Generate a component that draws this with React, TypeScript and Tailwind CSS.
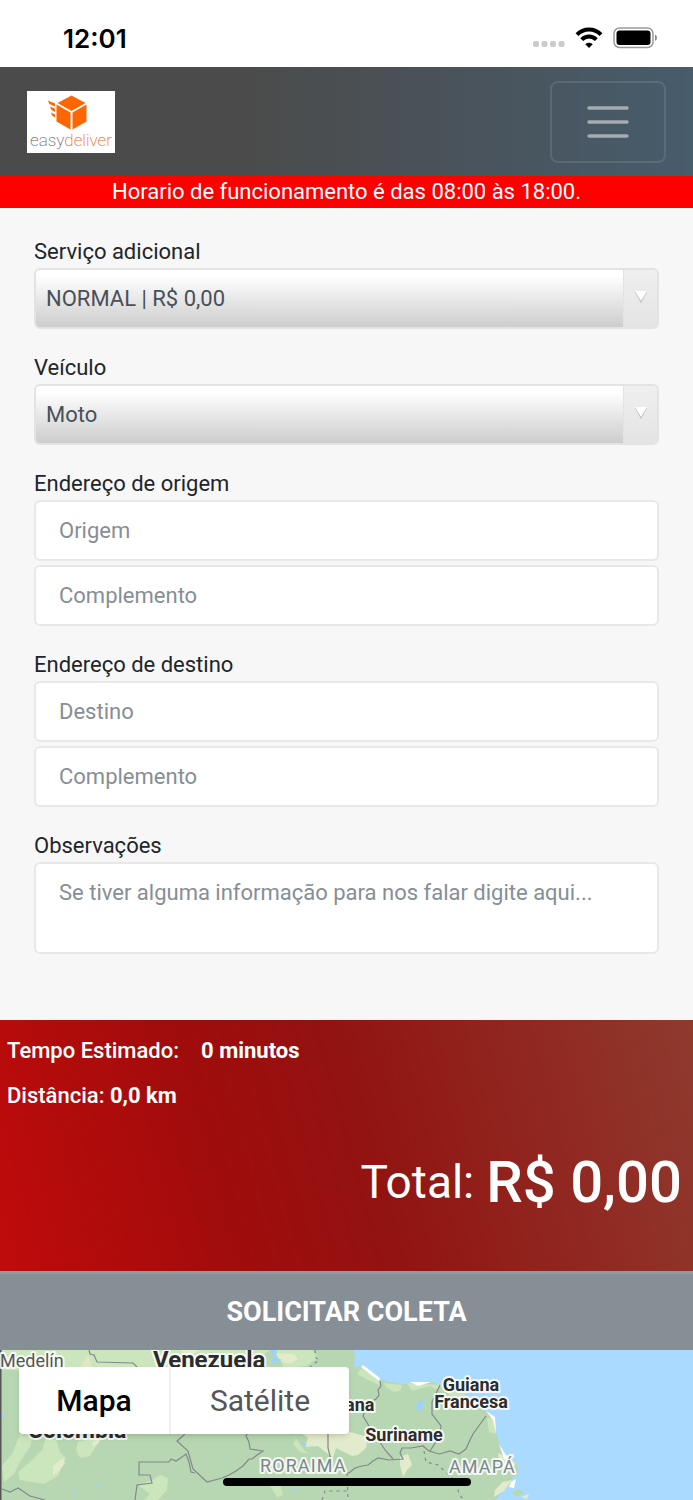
import React from 'react'

const Logo = () => (
  <a href="#" aria-label="easydeliver" className="flex h-[62px] w-[88px] flex-col items-center bg-white pt-1">
    <svg width="40" height="36" viewBox="0 0 40 36" fill="#ff6500" className="mr-2 shrink-0">
      <path d="M24.500 0.500L38.500 8L24.500 16L10.500 8Z" />
      <path d="M9.500 9.500L23.500 17.500V34.500L9.500 26.500Z" />
      <path d="M39.500 9.500L25.500 17.500V34.500L39.500 26.500Z" />
      <path d="M0.800 5.500L8 8.500V11.500L2.500 9Z" />
      <path d="M2.800 11.500L8 13.800V17L4.500 15Z" />
      <path d="M4 17.500L8 19.500V22.500L5 20.500Z" />
    </svg>
    <span className="font-['Roboto'] text-[17px] leading-[18px] font-extralight text-[#666]">
      easy<span className="text-[#f06a14]">deliver</span>
    </span>
  </a>
)

const StatusBar = () => (
  <div className="flex h-[67px] items-center justify-between bg-white pt-2 pr-[34px] pl-[63px]">
    <span className="pt-0.5 font-['Inter'] text-[26px] font-semibold text-black">12:01</span>
    <div className="flex items-center">
      <svg width="32" height="24" viewBox="0 0 32 24" fill="#cbcbcb">
        <rect x="0" y="15" width="6" height="6" rx="2" />
        <rect x="8.500" y="15" width="6" height="6" rx="2" />
        <rect x="17" y="15" width="6" height="6" rx="2" />
        <rect x="25.500" y="15" width="6" height="6" rx="2" />
      </svg>
      <svg width="28" height="22" viewBox="0 0 28 22" className="mx-2.5 shrink-0">
        <path d="M2 7.700C8.500 0.800 19.500 0.800 26 7.700" fill="none" stroke="#000" strokeWidth="4" />
        <path d="M6.700 12.600C10.800 8.400 17.200 8.400 21.300 12.600" fill="none" stroke="#000" strokeWidth="4" />
        <path d="M14 21L10.300 17.200C12.300 15.200 15.700 15.200 17.700 17.200Z" />
      </svg>
      <svg width="46" height="22" viewBox="0 0 46 22" className="shrink-0">
        <rect x="1" y="1" width="39" height="19.500" rx="5.500" fill="none" stroke="#999" strokeWidth="1.500" />
        <rect x="3.500" y="3.500" width="34" height="14.500" rx="3" />
        <path d="M42 7.500Q44 8.500 44 10.800T42 14Z" fill="#888" />
      </svg>
    </div>
  </div>
)

const Navbar = () => (
  <header className="flex h-[109px] items-center justify-between bg-linear-to-r from-[#4b4b4b] from-35% to-[#475c6c] px-[27px]">
    <Logo />
    <button
      type="button"
      aria-label="Menu"
      className="flex h-[82px] w-[116px] items-center justify-center rounded-lg border-2 border-white/10"
    >
      <svg width="44" height="34" viewBox="0 0 44 34" stroke="#a4abb1" strokeWidth="3.500" strokeLinecap="round">
        <path d="M3 3H41M3 17H41M3 31H41" />
      </svg>
    </button>
  </header>
)

const SelectField = ({ id, label, option }: { id: string; label: string; option: string }) => (
  <div className="flex flex-col">
    <label htmlFor={id} className="leading-[33px]">{label}</label>
    <div className="flex h-[61px] overflow-hidden rounded-md border-2 border-[#e3e3e3]">
      <select
        id={id}
        className="min-w-0 flex-1 appearance-none bg-linear-to-b from-white from-10% to-[#cdcdcd] px-2.5 text-[#495057]"
      >
        <option>{option}</option>
      </select>
      <div className="flex w-[34px] items-center justify-center border-l border-[#e3e3e3] bg-linear-to-b from-[#efefef] to-[#e4e4e4] pb-1">
        <svg width="14" height="14" viewBox="0 0 14 14">
          <path d="M1 2H13L7 13Z" fill="#bbb" />
          <path d="M1 1H13L7 11Z" fill="#fff" />
        </svg>
      </div>
    </div>
  </div>
)

const inputClass =
  'h-[61px] w-full rounded-md border-2 border-[#e8e8e8] bg-white px-[23px] text-[#495057] placeholder:text-[#868e96]'

const AddressField = ({ id, label, placeholder }: { id: string; label: string; placeholder: string }) => (
  <div className="flex flex-col">
    <label htmlFor={id} className="leading-[33px]">{label}</label>
    <div className="flex flex-col gap-1">
      <input id={id} type="text" placeholder={placeholder} className={inputClass} />
      <input type="text" aria-label={`${label} - complemento`} placeholder="Complemento" className={inputClass} />
    </div>
  </div>
)

const MapDrawing = () => (
  <svg
    className="h-[150px] w-full"
    viewBox="0 0 693 150"
    preserveAspectRatio="xMidYMid slice"
    role="img"
    aria-label="Mapa"
  >
    <rect width="693" height="150" fill="#aadaff" />
    <path
      d="M0 0H353L355 5L354 17L363 16L380 30L403 34L418 32L431 32L441 35L463 43L476 52L485 60L494 67L496 83L500 94L503 103L510 109L518 115L518 123L512 129L510 135L503 141L495 150H0Z"
      fill="#b7d7b2"
    />
    {/* lowlands */}
    <g fill="#cbe5bc">
      <path d="M2 0H270L262 6L230 18L100 18L85 20L2 20Z" />
      <path d="M276 0H312L318 8L306 16L284 18Z" />
      <path d="M20 84L33 84L30 97L20 112L14 124L4 132L2 116L12 104Z" />
      <path d="M30 112L42 100L46 88L56 90L60 102L66 108L58 126L44 134L20 130L18 122Z" />
      <path d="M78 92L92 88L102 88L96 96L90 106L80 108L76 100Z" />
      <path d="M138 135L152 130L160 125L168 128L167 140L158 150H144L150 144Z" />
      <path d="M357 24L363 16L380 30L379 35L370 31Z" />
      <path d="M384 33L402 35L400 41L394 42L386 37Z" />
      <path d="M407 33L441 35L438 40L430 36L412 41Z" />
      <path d="M441 35L463 43L468 47L450 46Z" />
      <path d="M487 68L494 68L496 84L489 82Z" />
      <path d="M296 88L304 100L309 104L300 102L293 94Z" />
      <path d="M270 136L280 134L283 145L277 147Z" />
    </g>
    <path d="M80 17L88 4L92 17Z" fill="#dfe8c4" />
    {/* savanna */}
    <g fill="#e3ebcd">
      <path d="M53 116L63 108L65 113L57 123L53 125Z" />
      <path d="M92 92L100 88L99 93L93 97Z" />
      <path d="M297 80L314 83L350 82L368 87L366 98L358 105L352 106L336 98L333 108L318 96L305 97L308 88Z" />
      <path d="M180 0H198L192 5L184 4Z" />
      <path d="M400 107L408 104L412 115L407 120L403 127L400 115Z" />
      <path d="M276 3L294 4L298 9L290 14L279 10Z" />
      <path d="M498 103L508 108L516 114L509 120L500 116Z" />
      <path d="M495 140L503 132L512 130L504 141L494 147Z" />
      <path d="M521 147L529 144L527 149Z" />
    </g>
    <path d="M511 142L520 139L524 143L516 147Z" fill="#b7d7b2" />
    <g fill="#fff">
      <path d="M363 15L380 28L379 31L361 17Z" />
      <path d="M410 32H431L418 36Z" />
      <path d="M486 61L495 67L496 83L493 70Z" />
      <path d="M499 94L506 105L513 109L504 109Z" />
      <path d="M511 132L516 129L514 138L509 137Z" />
    </g>
    <g fill="#9dd3fb">
      <path d="M270 0H277L275 7L282 10L270 14L273 7Z" />
      <path d="M417 52L425 50L423 56L419 62L416 58Z" />
      <path d="M298 91L307 95L305 97Z" />
      <path d="M95 132L101 137L99 138Z" />
      <path d="M70 138L78 145L74 143Z" />
      <path d="M2 61L4 66L2 67Z" />
      <path d="M294 137L297 140L295 143Z" />
    </g>
    {/* borders */}
    <g fill="none" stroke="#83898a" strokeWidth="1.200">
      <path d="M89 0L90 4L94 5L97 12L133 13L138 18" />
      <path d="M185 84L177 91L188 101L193 119L207 132L222 128L229 125L236 121L243 116L249 109L252 109L257 105L263 101L250 99L249 92L246 86L249 80" />
      <path d="M195 123L191 122L189 112L186 104L182 107L176 111L171 109L169 112H139V125H150L152 133L137 135L135 150" />
      <path d="M328 80V98L331 110" />
      <path d="M380 31L381 36L378 40L379 45L376 49L367 54L363 66L369 76L378 89L385 100L393 109" />
      <path d="M343 123H349L355 118L362 116L368 115L373 111L378 108L389 110L403 109L400 103L402 98L411 98L423 96L429 101L439 104L443 103L450 101L459 104L466 99L470 90L473 84L486 66" />
      <path d="M440 35L432 52V64L441 76L439 87L430 101" />
      <path d="M2 139L10 142L18 138L30 146L45 150" />
      <g strokeDasharray="3 4">
        <path d="M424 101L426 112L438 115L448 124L456 132L459 144L464 150" />
        <path d="M315 0L316 8L319 10L310 17M322 150L325 141H348M347 123L348 150" />
      </g>
    </g>
    <rect width="1.500" height="150" fill="#555" />
    <g
      className="font-['Roboto']"
      stroke="#fff"
      strokeOpacity=".85"
      strokeWidth="4"
      strokeLinejoin="round"
      paintOrder="stroke"
      fill="#2c2c2c"
    >
      <text x="0" y="17" fontSize="18" fill="#555">Medelín</text>
      <g fontWeight="700">
        <text x="153" y="18" fontSize="24">Venezuela</text>
        <text x="28" y="88" fontSize="23">Colombia</text>
        <text x="318" y="61" fontSize="18">Guiana</text>
        <text fontSize="18" textAnchor="middle">
          <tspan x="471" y="41">Guiana</tspan>
          <tspan x="471" y="58">Francesa</tspan>
        </text>
        <text x="404" y="91" fontSize="18" textAnchor="middle">Suriname</text>
      </g>
      <g fill="#7a868c" className="tracking-wider">
        <text x="260" y="122" fontSize="18">RORAIMA</text>
        <text x="449" y="123" fontSize="18">AMAPÁ</text>
      </g>
    </g>
  </svg>
)

const App = () => {
  return (
    <div className="flex w-full flex-col bg-[#f7f7f7] font-['Roboto',sans-serif] text-[22px] text-[#212529]">
      <StatusBar />
      <Navbar />
      <p className="bg-[#ff0000] text-center leading-8 text-white">
        Horario de funcionamento é das 08:00 às 18:00.
      </p>

      <form className="flex flex-col gap-[22px] px-[34px] pt-[27px] pb-[66px]">
        <SelectField id="servico" label="Serviço adicional" option="NORMAL | R$ 0,00" />
        <SelectField id="veiculo" label="Veículo" option="Moto" />
        <AddressField id="origem" label="Endereço de origem" placeholder="Origem" />
        <AddressField id="destino" label="Endereço de destino" placeholder="Destino" />
        <div className="flex flex-col">
          <label htmlFor="obs" className="leading-[33px]">Observações</label>
          <textarea
            id="obs"
            placeholder="Se tiver alguma informação para nos falar digite aqui..."
            className="h-[92px] w-full resize-none rounded-md border-2 border-[#e8e8e8] bg-white px-[23px] py-3 leading-[33px] placeholder:text-[#868e96]"
          />
        </div>
      </form>

      <section className="flex flex-col bg-[linear-gradient(75deg,#c00b0b,#a00c0c_32%,#921311_52%,#8f3a2e)] px-[7px] pt-[14px] pb-[47px] font-medium text-white">
        <p className="mb-3 flex gap-[22px] leading-[33px]">
          <span>Tempo Estimado:</span>
          <strong className="font-bold">0 minutos</strong>
        </p>
        <p className="leading-[33px]">
          Distância: <strong className="font-bold">0,0 km</strong>
        </p>
        <p className="mt-7 flex items-center justify-end gap-3 pr-1 text-[46px] leading-[84px] font-normal">
          <span>Total:</span>
          <strong className="text-[58px] font-medium">R$ 0,00</strong>
        </p>
      </section>
      <button
        type="button"
        className="h-[79px] border-t-3 border-[#929aa1] bg-[#868e96] text-[27px] font-bold text-white"
      >
        SOLICITAR COLETA
      </button>

      <section className="relative overflow-hidden">
        <MapDrawing />
        <div className="absolute top-[17px] left-[19px] flex h-[67px] w-[330px] overflow-hidden rounded bg-white text-[30px] shadow-md">
          <button type="button" className="w-[152px] border-r-2 border-[#f0f0f0] font-medium text-black">Mapa</button>
          <button type="button" className="flex-1 text-[#565656]">Satélite</button>
        </div>
        <div className="absolute bottom-3.5 left-1/2 h-2 w-[248px] -translate-x-1/2 rounded-full bg-black" />
      </section>
    </div>
  )
}

export default App
